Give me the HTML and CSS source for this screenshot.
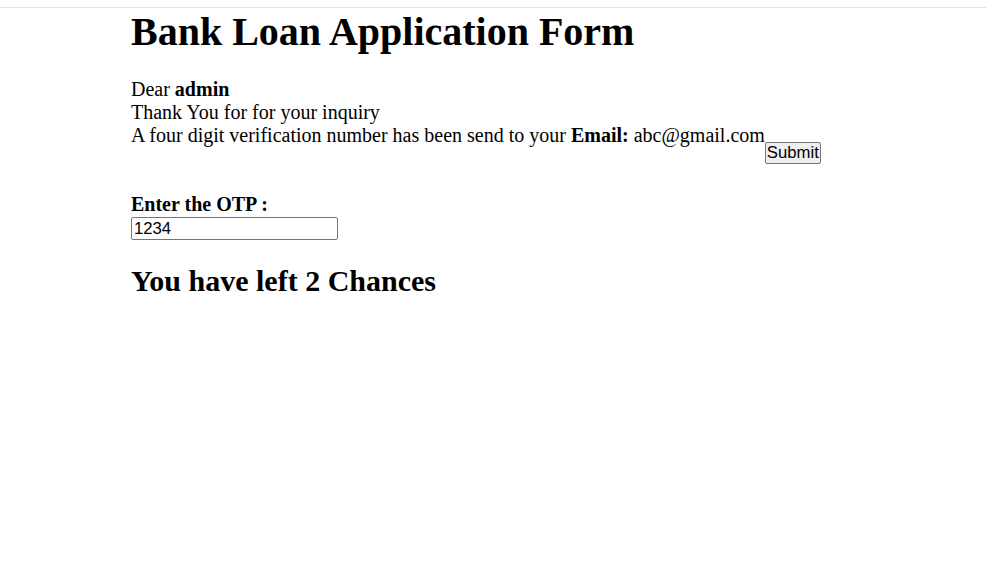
FILE: index.html
```html
<!DOCTYPE html>
<html>
<head>
<meta charset="utf-8">
<link rel="stylesheet" href="styles.css">
</head>
<body>
<div class="topline"></div>
<main class="page">
  <h1 class="title">Bank Loan Application Form</h1>
  <form class="otp-form">
    <p class="msg">Dear <b>admin</b><br>Thank You for for your inquiry<br>A four digit verification number has been send to your <b>Email:</b> abc@gmail.com<button type="button" class="submit">Submit</button></p>
    <label class="otp-label">Enter the OTP :</label>
    <input class="otp-input" type="text" value="1234">
  </form>
  <h2 class="chances">You have left 2 Chances</h2>
</main>
</body>
</html>
```
FILE: styles.css
```css
html, body {
  margin: 0;
  padding: 0;
  background: #fff;
}
body {
  font-family: "Liberation Serif", "Times New Roman", serif;
  font-size: 20px;
  color: #000;
}
.topline {
  height: 7px;
  border-bottom: 1px solid #e3e3e3;
}
.page {
  padding-left: 131px;
}
.title {
  font-size: 40px;
  font-weight: bold;
  margin: 0 0 23px 0;
  padding-top: 1px;
  line-height: 46px;
}
.otp-form {
  margin: 0;
}
.msg {
  margin: 0 0 29px 0;
  line-height: 23px;
}
.submit {
  font-family: Arial, "Liberation Sans", sans-serif;
  font-size: 16.7px;
  padding: 0 1px;
  height: 22px;
  vertical-align: -16px;
  margin: 0;
  border: 1px solid #767676;
  border-radius: 2px;
  background: #efefef;
  color: #000;
}
.otp-label {
  display: block;
  font-weight: bold;
  line-height: 23px;
}
.otp-input {
  display: block;
  box-sizing: border-box;
  width: 207px;
  height: 23px;
  margin: 1px 0 0 0;
  padding: 1px 2px;
  font-family: Arial, "Liberation Sans", sans-serif;
  font-size: 16.7px;
  border: 1px solid #767676;
  border-radius: 2px;
}
.chances {
  font-size: 30px;
  font-weight: bold;
  margin: 23px 0 0 0;
  line-height: 35px;
}
```
